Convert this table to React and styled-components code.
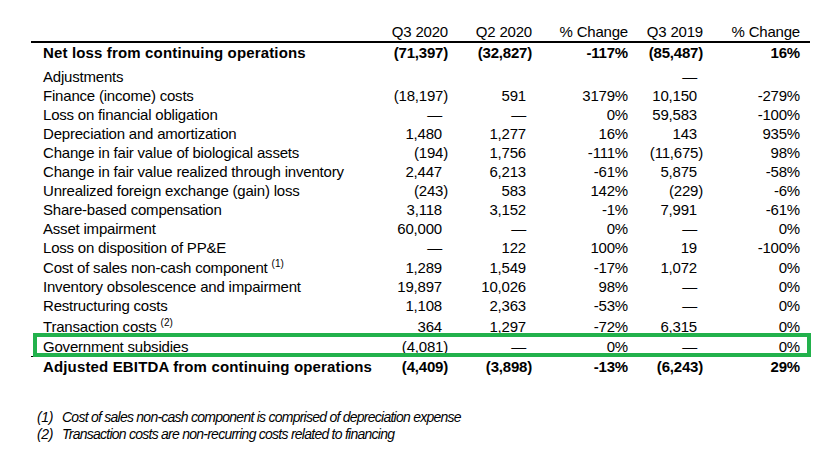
import React from 'react';
import styled, {createGlobalStyle} from 'styled-components';

const GlobalStyle = createGlobalStyle`
  body {
    margin: 0;
    background: #fff;
    font-family: "Liberation Sans", Arial, sans-serif;
    color: #000;
  }
`;

const Page = styled.div`
  width: 779px;
  padding: 22px 0 0 31px;
`;

const Row = styled.div`
  position: relative;
  display: grid;
  grid-template-columns: 349px 68px 84px 96px 75px 97px;
  padding-right: 10px;
  margin-top: ${(p) => p.gap || 0}px;
  height: ${(p) => p.h || 19}px;
  line-height: ${(p) => p.h || 19}px;
  font-size: 15px;
  letter-spacing: -0.2px;
  font-weight: ${(p) => (p.bold ? 'bold' : 'normal')};
  white-space: nowrap;
  border-bottom: ${(p) => (p.rule ? `${p.rule}px solid #000` : 'none')};

  ${(p) => p.highlight && `
    &::after {
      content: '';
      position: absolute;
      top: -4px;
      left: 2px;
      right: -1px;
      bottom: -1px;
      border: 4px solid #22b14c;
      pointer-events: none;
    }
  `}
`;

const Label = styled.div`
  padding-left: 12px;
  letter-spacing: ${(p) => (p.bold ? '0.15px' : '-0.2px')};
`;

const Cell = styled.div`
  text-align: right;
  padding-right: ${(p) => (p.paren ? 0 : 6)}px;
`;

const Pct = styled.div`
  text-align: right;
`;

const Sup = styled.sup`
  font-size: 10px;
  line-height: 0;
  margin-left: 4px;
  vertical-align: 6px;
  letter-spacing: 0;
`;

const Notes = styled.div`
  margin-top: 33px;
  padding-left: 6px;
  font-size: 14px;
  font-style: italic;
  letter-spacing: -0.75px;
  line-height: 16.5px;
`;

const Note = styled.div`
  display: flex;
`;

const NoteNum = styled.span`
  width: 25px;
  letter-spacing: -0.3px;
`;

const DASH = '\u2014';

const rows = [
    {label: 'Adjustments', h: 18, gap: 6, values: ['', '', '', DASH, '']},
    {label: 'Finance (income) costs', values: ['(18,197)', '591', '3179%', '10,150', '-279%']},
    {label: 'Loss on financial obligation', values: [DASH, DASH, '0%', '59,583', '-100%']},
    {label: 'Depreciation and amortization', values: ['1,480', '1,277', '16%', '143', '935%']},
    {label: 'Change in fair value of biological assets', values: ['(194)', '1,756', '-111%', '(11,675)', '98%']},
    {label: 'Change in fair value realized through inventory', values: ['2,447', '6,213', '-61%', '5,875', '-58%']},
    {label: 'Unrealized foreign exchange (gain) loss', values: ['(243)', '583', '142%', '(229)', '-6%']},
    {label: 'Share-based compensation', values: ['3,118', '3,152', '-1%', '7,991', '-61%']},
    {label: 'Asset impairment', values: ['60,000', DASH, '0%', DASH, '0%']},
    {label: 'Loss on disposition of PP&E', values: [DASH, '122', '100%', '19', '-100%']},
    {label: 'Cost of sales non-cash component', note: '(1)', gap: 1, values: ['1,289', '1,549', '-17%', '1,072', '0%']},
    {label: 'Inventory obsolescence and impairment', values: ['19,897', '10,026', '98%', DASH, '0%']},
    {label: 'Restructuring costs', values: ['1,108', '2,363', '-53%', DASH, '0%']},
    {label: 'Transaction costs', note: '(2)', gap: 2, values: ['364', '1,297', '-72%', '6,315', '0%']},
    {label: 'Government subsidies', gap: 1, highlight: true, rule: 1, values: ['(4,081)', DASH, '0%', DASH, '0%']},
];

const isParen = (v) => v.startsWith('(');

const renderValues = (values) =>
    values.map((v, i) =>
        i === 2 || i === 4
            ? <Pct key={i}>{v}</Pct>
            : <Cell key={i} paren={isParen(v)}>{v}</Cell>
    );

export default function App() {
    return (
        <Page>
            <GlobalStyle/>
            <Row rule={2}>
                <Label/>
                <Cell paren>Q3 2020</Cell>
                <Cell paren>Q2 2020</Cell>
                <Pct>% Change</Pct>
                <Cell paren>Q3 2019</Cell>
                <Pct>% Change</Pct>
            </Row>
            <Row bold>
                <Label bold>Net loss from continuing operations</Label>
                {renderValues(['(71,397)', '(32,827)', '-117%', '(85,487)', '16%'])}
            </Row>
            {rows.map((r) => (
                <Row key={r.label} h={r.h} gap={r.gap} highlight={r.highlight} rule={r.rule}>
                    <Label>
                        {r.label}
                        {r.note ? <Sup>{r.note}</Sup> : null}
                    </Label>
                    {renderValues(r.values)}
                </Row>
            ))}
            <Row bold>
                <Label bold>Adjusted EBITDA from continuing operations</Label>
                {renderValues(['(4,409)', '(3,898)', '-13%', '(6,243)', '29%'])}
            </Row>
            <Notes>
                <Note>
                    <NoteNum>(1)</NoteNum>
                    <span>Cost of sales non-cash component is comprised of depreciation expense</span>
                </Note>
                <Note>
                    <NoteNum>(2)</NoteNum>
                    <span>Transaction costs are non-recurring costs related to financing</span>
                </Note>
            </Notes>
        </Page>
    );
}
